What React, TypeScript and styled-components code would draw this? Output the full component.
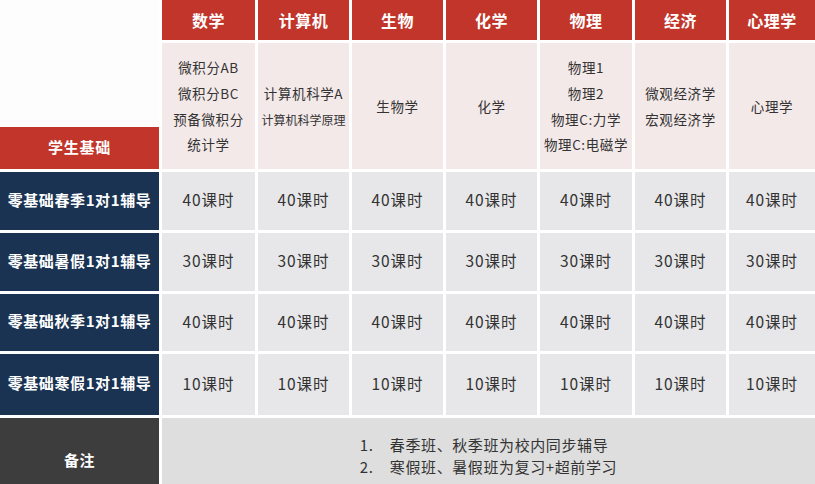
import React from 'react';
import styled, { createGlobalStyle } from 'styled-components';

const GlobalStyle = createGlobalStyle`
  html, body {
    margin: 0;
    padding: 0;
    background: #ffffff;
    overflow: hidden;
  }
  body {
    font-family: "Noto Sans CJK SC", "Noto Sans", sans-serif;
  }
`;

const Table = styled.div`
  display: grid;
  width: 815px;
  height: 484px;
  grid-template-columns: 159px 93px 91px 91px 91px 92px 91px 1fr;
  grid-template-rows: 40px 126px 58px 58px 57px 61px 1fr;
  column-gap: 3px;
  row-gap: 3px;
  overflow: hidden;
`;

const Corner = styled.div`
  grid-column: 1;
  grid-row: 1 / span 2;
  display: flex;
  flex-direction: column;
  justify-content: flex-end;
  background: #fdfdfd;
`;

const CornerLabel = styled.div`
  height: 42px;
  box-sizing: border-box;
  padding-bottom: 4px;
  background: #c1352a;
  color: #fff;
  font-weight: 700;
  font-size: 15px;
  display: flex;
  align-items: center;
  justify-content: center;
  letter-spacing: 0.8px;
`;

const HeadCell = styled.div`
  background: #c1352a;
  color: #fff;
  font-weight: 700;
  font-size: 16px;
  display: flex;
  align-items: center;
  justify-content: center;
  padding-bottom: 1px;
  letter-spacing: 0.5px;
`;

const SubjectCell = styled.div`
  background: #f3e9e9;
  color: #333;
  line-height: 25.7px;
  display: flex;
  flex-direction: column;
  align-items: center;
  justify-content: center;
  text-align: center;
  white-space: nowrap;
  padding-top: 1px;
`;

const SubjectLine = styled.span<{ $small?: boolean }>`
  font-size: ${(p) => (p.$small ? '12px' : '13.5px')};
  letter-spacing: ${(p) => (p.$small ? '0' : '0.6px')};
`;

const RowLabel = styled.div<{ $dark?: boolean }>`
  background: ${(p) => (p.$dark ? '#3d3d3d' : '#1a3353')};
  color: #fff;
  font-weight: 700;
  font-size: 15px;
  letter-spacing: 0.6px;
  display: flex;
  align-items: center;
  justify-content: center;
  white-space: nowrap;
  padding: ${(p) => (p.$dark ? '17px 0 0' : '0 0 4px')};
`;

const DataCell = styled.div`
  background: #e7e7e9;
  color: #333;
  font-size: 15.5px;
  letter-spacing: 0.9px;
  display: flex;
  align-items: center;
  justify-content: center;
  padding-bottom: 4px;
`;

const NotesCell = styled.div`
  grid-column: 2 / -1;
  background: #dedede;
  display: flex;
  align-items: center;
  justify-content: center;
  padding-top: 9px;
`;

const NotesList = styled.ol`
  margin: 0;
  padding: 0;
  list-style: none;
  color: #333;
  font-size: 15px;
  line-height: 22px;
  letter-spacing: 0.6px;
`;

const NoteItem = styled.li`
  display: flex;
`;

const NoteNum = styled.span`
  width: 30px;
`;

const subjects = ['数学', '计算机', '生物', '化学', '物理', '经济', '心理学'];

const topics: { text: string; small?: boolean }[][] = [
  [{ text: '微积分AB' }, { text: '微积分BC' }, { text: '预备微积分' }, { text: '统计学' }],
  [{ text: '计算机科学A' }, { text: '计算机科学原理', small: true }],
  [{ text: '生物学' }],
  [{ text: '化学' }],
  [{ text: '物理1' }, { text: '物理2' }, { text: '物理C:力学' }, { text: '物理C:电磁学' }],
  [{ text: '微观经济学' }, { text: '宏观经济学' }],
  [{ text: '心理学' }],
];

const plans = [
  { name: '零基础春季1对1辅导', hours: 40 },
  { name: '零基础暑假1对1辅导', hours: 30 },
  { name: '零基础秋季1对1辅导', hours: 40 },
  { name: '零基础寒假1对1辅导', hours: 10 },
];

const App: React.FC = () => {
  return (
    <>
      <GlobalStyle />
      <Table>
        <Corner>
          <CornerLabel>学生基础</CornerLabel>
        </Corner>
        {subjects.map((s) => (
          <HeadCell key={s}>{s}</HeadCell>
        ))}
        {topics.map((lines, i) => (
          <SubjectCell key={i}>
            {lines.map((l) => (
              <SubjectLine key={l.text} $small={l.small}>
                {l.text}
              </SubjectLine>
            ))}
          </SubjectCell>
        ))}
        {plans.map((plan) => (
          <React.Fragment key={plan.name}>
            <RowLabel>{plan.name}</RowLabel>
            {subjects.map((s) => (
              <DataCell key={s}>{plan.hours}课时</DataCell>
            ))}
          </React.Fragment>
        ))}
        <RowLabel $dark>备注</RowLabel>
        <NotesCell>
          <NotesList>
            <NoteItem>
              <NoteNum>1.</NoteNum>春季班、秋季班为校内同步辅导
            </NoteItem>
            <NoteItem>
              <NoteNum>2.</NoteNum>寒假班、暑假班为复习+超前学习
            </NoteItem>
          </NotesList>
        </NotesCell>
      </Table>
    </>
  );
};

export default App;
